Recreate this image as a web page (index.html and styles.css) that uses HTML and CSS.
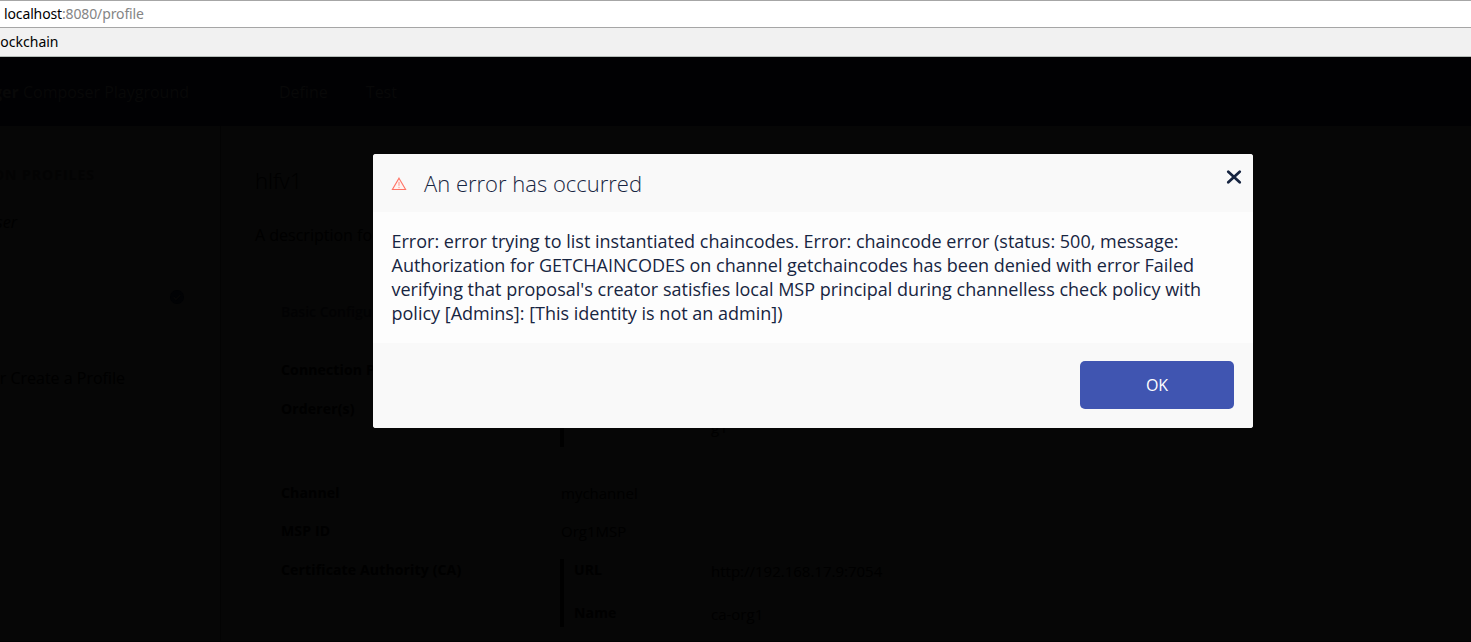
FILE: index.html
```html
<!DOCTYPE html>
<html lang="en">
<head>
<meta charset="utf-8">
<title>Composer Playground</title>
<link rel="stylesheet" href="styles.css">
</head>
<body>
<div class="address-bar"><span class="host">localhost</span><span class="path">:8080/profile</span></div>
<div class="bookmarks"><span class="bookmark">ockchain</span></div>
<div class="app">
  <header class="nav">
    <div class="brand"><b>ger</b> Composer Playground</div>
    <a class="tab define">Define</a>
    <a class="tab">Test</a>
  </header>
  <div class="main">
    <aside class="sidebar">
      <div class="side-title">ON PROFILES</div>
      <div class="side-user">ser</div>
      <div class="side-check">
        <svg width="14" height="14" viewBox="0 0 14 14"><circle cx="7" cy="7" r="7" fill="#010204"/><path d="M3.7 7.2l2.2 2.2 4.4-4.5" fill="none" stroke="#060606" stroke-width="1.5"/></svg>
      </div>
      <div class="side-create">r Create a Profile</div>
    </aside>
    <section class="profile">
      <h1 class="profile-name">hlfv1</h1>
      <p class="description">A description fo</p>
      <div class="settings">
        <h2 class="section-title">Basic Configu</h2>
        <div class="row"><span class="label">Connection P</span></div>
        <div class="row tall">
          <span class="label">Orderer(s)</span>
          <div class="group orderers">
            <div class="pair"><b></b><span>g1</span></div>
          </div>
        </div>
        <div class="row"><span class="label">Channel</span><span class="value">mychannel</span></div>
        <div class="row"><span class="label">MSP ID</span><span class="value">Org1MSP</span></div>
        <div class="row last">
          <span class="label">Certificate Authority (CA)</span>
          <div class="group">
            <div class="pair"><b>URL</b><span>http://192.168.17.9:7054</span></div>
            <div class="pair"><b>Name</b><span>ca-org1</span></div>
          </div>
        </div>
      </div>
    </section>
  </div>
</div>
<div class="modal" role="dialog">
  <div class="modal-header">
    <svg class="warning" width="16" height="14" viewBox="0 0 16 14"><path d="M8 1.2L14.6 12.5H1.4Z" fill="#fff3f1" stroke="#ff7466" stroke-width="1.1"/><path d="M8 4.8v4M8 9.8v1.4" stroke="#ff8f84" stroke-width="1"/></svg>
    <h2 class="modal-title">An error has occurred</h2>
    <svg class="close" width="16" height="14" viewBox="0 0 16 14"><path d="M2.3 1.7l11.4 10.6M13.7 1.7L2.3 12.3" fill="none" stroke="#172541" stroke-width="2.7" stroke-linecap="round"/></svg>
  </div>
  <div class="modal-body">Error: error trying to list instantiated chaincodes. Error: chaincode error (status: 500, message:<br>Authorization for GETCHAINCODES on channel getchaincodes has been denied with error Failed<br>verifying that proposal's creator satisfies local MSP principal during channelless check policy with<br>policy [Admins]: [This identity is not an admin])</div>
  <div class="modal-footer"><button class="ok">OK</button></div>
</div>
</body>
</html>
```
FILE: styles.css
```css
* { box-sizing: border-box; }
body {
  margin: 0;
  width: 1471px;
  height: 642px;
  overflow: hidden;
  position: relative;
  display: flex;
  flex-direction: column;
  background: #060606;
  font-family: "Open Sans", "Noto Sans", sans-serif;
  color: #000;
}
.address-bar {
  height: 28px;
  flex: none;
  border-top: 1px solid #a6a6a6;
  border-bottom: 1px solid #a6a6a6;
  background: #fff;
  padding-left: 4px;
  font: 14px/26px "Noto Sans", sans-serif;
  letter-spacing: -0.13px;
  white-space: nowrap;
}
.path { color: #858585; }
.bookmarks {
  height: 29px;
  flex: none;
  border-bottom: 1px solid #b5bcb8;
  background: #f1f1f1;
  width: 100%;
  overflow: hidden;
  font: 14px/28px "Noto Sans", sans-serif;
}
.bookmark {
  display: flex;
  justify-content: flex-end;
  width: 58.5px;
}
.app { flex: 1; display: flex; flex-direction: column; overflow: hidden; }
.nav {
  height: 69px;
  flex: none;
  display: flex;
  background: #010103;
  color: #080808;
  font-size: 16px;
  line-height: 70px;
}
.brand {
  width: 189px;
  display: flex;
  justify-content: flex-end;
  white-space: pre;
}
.tab { margin-left: 38px; }
.define { margin-left: 90px; }
.main { flex: 1; display: flex; border-bottom: 2px solid #020202; }
.sidebar {
  width: 221px;
  flex: none;
  border-right: 1px solid #030303;
  overflow: hidden;
  white-space: nowrap;
}
.side-title, .side-user, .side-create { display: flex; justify-content: flex-end; line-height: 24px; }
.side-title { width: 95px; margin-top: 37px; font-size: 14px; font-weight: 700; letter-spacing: 1px; color: #030303; }
.side-user { width: 17px; margin-top: 23px; font-size: 16px; font-style: italic; }
.side-check { display: flex; margin: 56px 0 0 170px; }
.side-create { width: 125px; margin-top: 62px; font-size: 16px; }
.profile { flex: 1; padding: 36px 0 0 34px; }
.profile-name { margin: 0; font-size: 22px; font-weight: 300; line-height: 36px; }
.description { margin: 24px 0 0; font-size: 16px; line-height: 26px; }
.settings { padding-left: 26px; font-size: 14px; }
.section-title { margin: 52px 0 27px; font-size: 14px; font-weight: 600; line-height: 24px; color: #020203; }
.row { height: 38.5px; display: flex; line-height: 38px; }
.tall { height: 84px; }
.last { height: 90px; }
.label { width: 280px; font-weight: 700; letter-spacing: 0.15px; }
.value { font-size: 15px; }
.group {
  width: 420px;
  height: 68px;
  margin: 8px 0 0 -1px;
  border-left: 4px solid #000;
  padding-left: 10px;
  line-height: 21px;
}
.orderers { height: 49px; align-self: flex-start; padding-top: 17px; }
.pair { display: flex; height: 43px; }
.pair b { width: 137px; letter-spacing: 0.15px; }
.pair span { padding-top: 2px; font-size: 15px; }
.modal {
  position: absolute;
  left: 373px;
  top: 154px;
  width: 880px;
  height: 274px;
  border-radius: 3px;
  overflow: hidden;
  background: #fdfdfd;
  color: #172541;
}
.modal-header { height: 58px; display: flex; background: #f9f9f9; padding: 0 11px 0 18px; }
.warning { margin-top: 23px; }
.modal-title { flex: 1; margin: 0 0 0 17px; font-size: 22px; font-weight: 300; line-height: 58px; }
.close { margin-top: 16px; }
.modal-body { height: 131px; padding: 17px 18px 0 18.5px; font-size: 18px; line-height: 24px; white-space: nowrap; }
.modal-footer { height: 85px; display: flex; justify-content: flex-end; padding: 18px 19px 0 0; background: #f9f9f9; }
.ok {
  width: 154px;
  height: 48px;
  border: 0;
  border-radius: 5px;
  background: #4055b1;
  color: #fff;
  font: 16px/48px "Open Sans", sans-serif;
  padding: 0;
}
```
